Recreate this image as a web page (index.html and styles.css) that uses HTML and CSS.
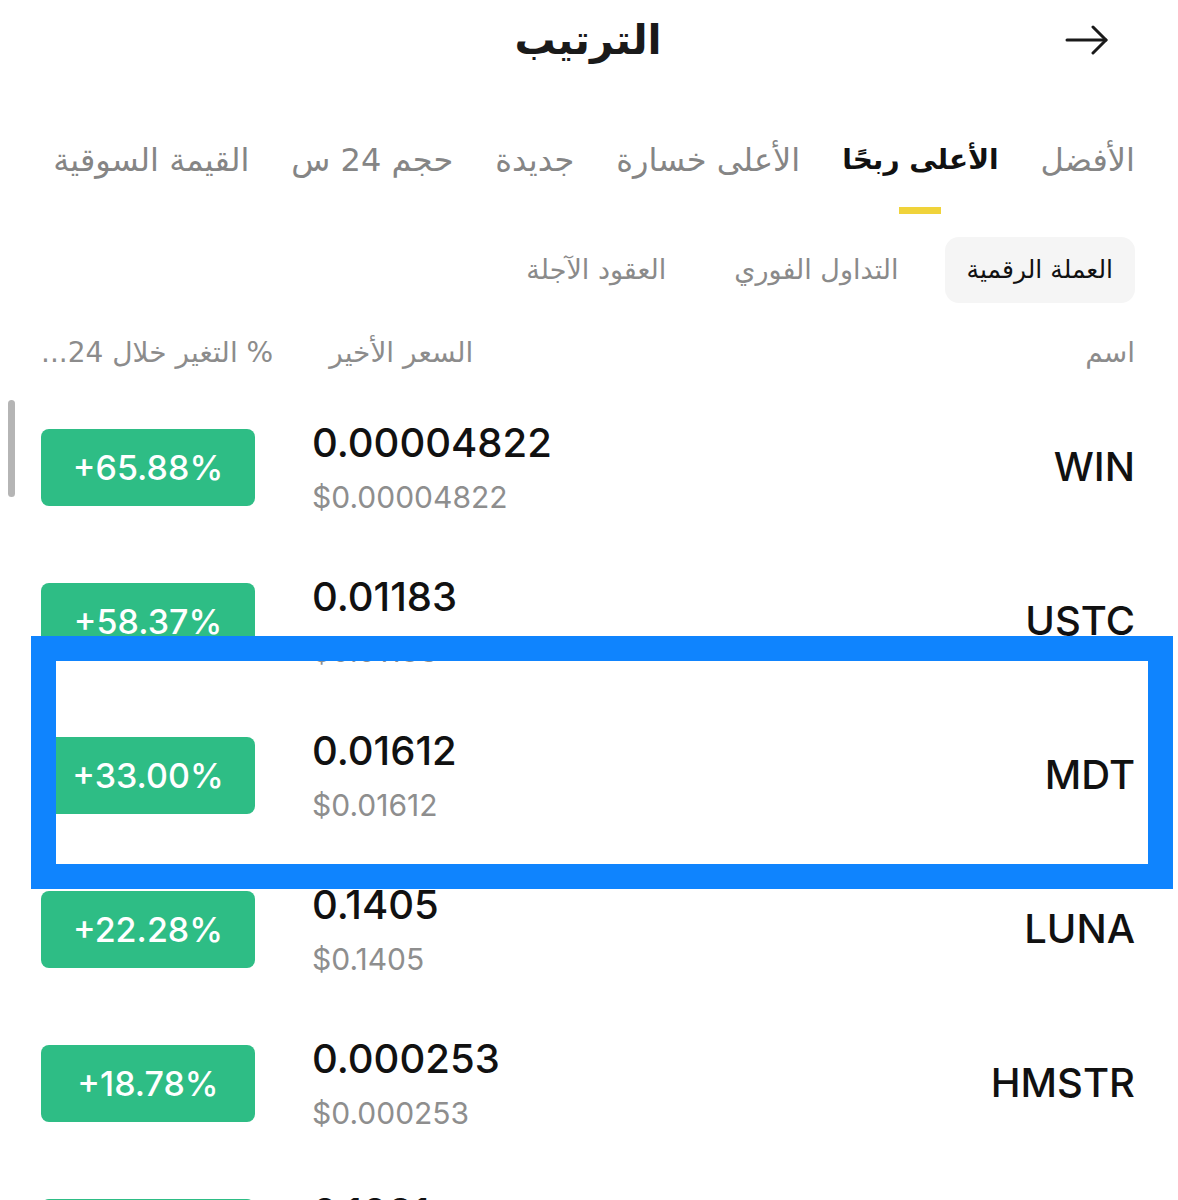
FILE: index.html
```html
<!DOCTYPE html>
<html lang="ar" dir="rtl">
<head>
    <meta charset="utf-8">
    <title>الترتيب</title>
    <link rel="stylesheet" href="styles.css">
</head>
<body>
<div class="page">

    <header class="topbar">
        <button class="back" aria-label="رجوع">
            <svg width="44" height="30" viewBox="0 0 44 30" fill="none" stroke="#1a1a1a" stroke-width="3" stroke-linecap="round" stroke-linejoin="round">
                <path d="M2 15 H41"/>
                <path d="M28 2 L41 15 L28 28"/>
            </svg>
        </button>
        <h1 class="title">الترتيب</h1>
        <div></div>
    </header>

    <ul class="tabs">
        <li class="tab">الأفضل</li>
        <li class="tab active">الأعلى ربحًا</li>
        <li class="tab">الأعلى خسارة</li>
        <li class="tab">جديدة</li>
        <li class="tab">حجم 24 س</li>
        <li class="tab">القيمة السوقية</li>
    </ul>

    <div class="segments">
        <div class="segment selected">العملة الرقمية</div>
        <div class="segment">التداول الفوري</div>
        <div class="segment">العقود الآجلة</div>
    </div>

    <div class="col-head">
        <span>اسم</span>
        <div class="col-head-right">
            <span>السعر الأخير</span>
            <span>% التغير خلال 24...</span>
        </div>
    </div>

    <div class="list">
        <div class="row">
            <div class="name">WIN</div>
            <div class="price">
                <div class="last">0.00004822</div>
                <div class="usd">$0.00004822</div>
            </div>
            <div class="change">+65.88%</div>
        </div>
        <div class="row">
            <div class="name">USTC</div>
            <div class="price">
                <div class="last">0.01183</div>
                <div class="usd">$0.01183</div>
            </div>
            <div class="change">+58.37%</div>
        </div>
        <div class="row">
            <div class="name">MDT</div>
            <div class="price">
                <div class="last">0.01612</div>
                <div class="usd">$0.01612</div>
            </div>
            <div class="change">+33.00%</div>
        </div>
        <div class="row">
            <div class="name">LUNA</div>
            <div class="price">
                <div class="last">0.1405</div>
                <div class="usd">$0.1405</div>
            </div>
            <div class="change">+22.28%</div>
        </div>
        <div class="row">
            <div class="name">HMSTR</div>
            <div class="price">
                <div class="last">0.000253</div>
                <div class="usd">$0.000253</div>
            </div>
            <div class="change">+18.78%</div>
        </div>
        <div class="row">
            <div class="name">ACT</div>
            <div class="price">
                <div class="last">0.1031</div>
                <div class="usd">$0.1031</div>
            </div>
            <div class="change">+15.41%</div>
        </div>
    </div>

    <!-- scroll indicator and the highlight frame drawn over the list -->
    <div class="scrollbar"></div>
    <div class="highlight"></div>
</div>
</body>
</html>
```

FILE: styles.css
```css
html, body {
    margin: 0;
    padding: 0;
    background-color: #fff;
}

body {
    font-family: Inter, "DejaVu Sans", sans-serif;
    color: #111;
    height: 1200px;
    overflow: hidden;
}

.page {
    position: relative;
    padding-right: 43px;
    padding-left: 41px;
}

/* top bar */
.topbar {
    display: grid;
    grid-template-columns: 1fr auto 1fr;
    align-items: center;
    height: 80px;
}

.back {
    justify-self: start;
    margin-right: 26px;
    padding: 0;
    border: none;
    background: none;
    line-height: 0;
}

.title {
    margin: 0;
    font-family: "DejaVu Sans", sans-serif;
    font-size: 41px;
    font-weight: bold;
    color: #1a1a1a;
}

/* main tabs */
.tabs {
    display: flex;
    align-items: flex-start;
    gap: 42px;
    list-style: none;
    margin: 60px 0 0;
    padding: 0;
    white-space: nowrap;
    overflow: hidden;
}

.tab {
    display: flex;
    flex-direction: column;
    align-items: center;
    font-family: "DejaVu Sans", sans-serif;
    font-size: 32px;
    line-height: 40px;
    color: #858585;
}

.tab.active {
    color: #111;
    font-size: 28px;
    font-weight: bold;
}

.tab.active::after {
    content: "";
    display: block;
    width: 42px;
    height: 7px;
    margin-top: 27px;
    background-color: #f0d33a;
}

/* segment switch */
.segments {
    display: flex;
    gap: 24px;
    margin-top: 23px;
}

.segment {
    height: 66px;
    line-height: 66px;
    padding: 0 22px;
    font-family: "DejaVu Sans", sans-serif;
    font-size: 27px;
    color: #8a8a8a;
}

.segment.selected {
    background-color: #f5f5f5;
    border-radius: 14px;
    font-size: 25px;
    color: #111;
}

/* column titles */
.col-head {
    display: flex;
    justify-content: space-between;
    margin-top: 30px;
    height: 40px;
    line-height: 40px;
    font-family: "DejaVu Sans", sans-serif;
    font-size: 28px;
    color: #8c8c8c;
}

.col-head-right {
    display: flex;
    gap: 56px;
}

/* list */
.list {
    margin-top: 17px;
}

.row {
    display: grid;
    grid-template-columns: 1fr 388px 214px;
    column-gap: 57px;
    align-items: center;
    height: 154px;
}

.name {
    font-size: 40px;
    line-height: 48px;
    font-weight: 500;
    color: #111;
}

.price {
    direction: ltr;
    text-align: left;
}

.last {
    font-size: 40px;
    line-height: 48px;
    font-weight: 500;
    color: #111;
}

.usd {
    margin-top: 12px;
    font-size: 30px;
    line-height: 36px;
    color: #8e8e8e;
}

.change {
    direction: ltr;
    height: 77px;
    line-height: 77px;
    border-radius: 8px;
    background-color: #2ebd85;
    color: #fff;
    text-align: center;
    font-size: 34px;
    font-weight: 500;
}

/* overlays */
.scrollbar {
    position: absolute;
    left: 8px;
    top: 400px;
    width: 7px;
    height: 97px;
    border-radius: 4px;
    background-color: #b5b5b5;
}

.highlight {
    position: absolute;
    left: 31px;
    top: 636px;
    width: 1142px;
    height: 253px;
    box-sizing: border-box;
    border: 25px solid #0f84fe;
}
```
